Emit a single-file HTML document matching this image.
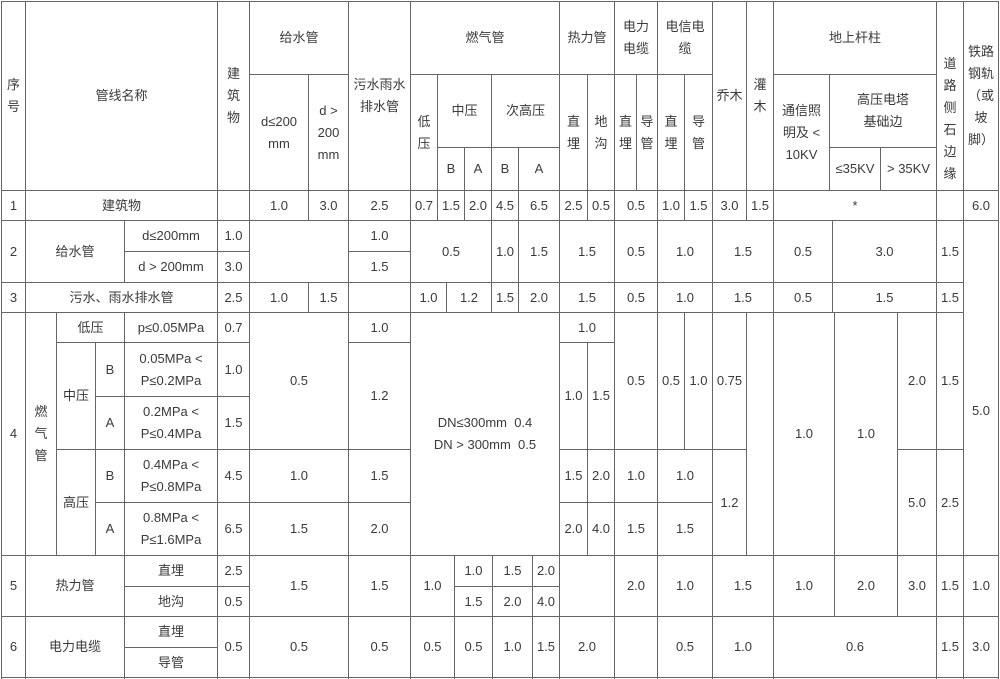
<!DOCTYPE html>
<html><head><meta charset="utf-8"><style>
html,body{margin:0;padding:0;background:#fff;width:1000px;height:679px;overflow:hidden;}
body{position:relative;font-family:"Liberation Sans","Noto Sans CJK SC",sans-serif;font-size:13px;color:#3a3a3a;}
.c{position:absolute;box-sizing:border-box;border:1px solid #666;display:flex;align-items:center;justify-content:center;text-align:center;line-height:22px;}
</style></head><body>
<!-- header -->
<div class="c" style="left:1px;top:1px;width:25px;height:190px">序<br>号</div>
<div class="c" style="left:25px;top:1px;width:193px;height:190px">管线名称</div>
<div class="c" style="left:217px;top:1px;width:33px;height:190px">建<br>筑<br>物</div>
<div class="c" style="left:249px;top:1px;width:100px;height:74px">给水管</div>
<div class="c" style="left:249px;top:74px;width:60px;height:117px">d≤200<br>mm</div>
<div class="c" style="left:308px;top:74px;width:41px;height:117px">d &gt;<br>200<br>mm</div>
<div class="c" style="left:348px;top:1px;width:63px;height:190px">污水雨水<br>排水管</div>
<div class="c" style="left:410px;top:1px;width:150px;height:74px">燃气管</div>
<div class="c" style="left:410px;top:74px;width:28px;height:117px">低<br>压</div>
<div class="c" style="left:437px;top:74px;width:55px;height:74px">中压</div>
<div class="c" style="left:437px;top:147px;width:28px;height:44px">B</div>
<div class="c" style="left:464px;top:147px;width:28px;height:44px">A</div>
<div class="c" style="left:491px;top:74px;width:69px;height:74px">次高压</div>
<div class="c" style="left:491px;top:147px;width:28px;height:44px">B</div>
<div class="c" style="left:518px;top:147px;width:42px;height:44px">A</div>
<div class="c" style="left:559px;top:1px;width:56px;height:74px">热力管</div>
<div class="c" style="left:559px;top:74px;width:29px;height:117px">直<br>埋</div>
<div class="c" style="left:587px;top:74px;width:28px;height:117px">地<br>沟</div>
<div class="c" style="left:614px;top:1px;width:44px;height:74px">电力<br>电缆</div>
<div class="c" style="left:614px;top:74px;width:23px;height:117px">直<br>埋</div>
<div class="c" style="left:636px;top:74px;width:22px;height:117px">导<br>管</div>
<div class="c" style="left:657px;top:1px;width:56px;height:74px">电信电<br>缆</div>
<div class="c" style="left:657px;top:74px;width:28px;height:117px">直<br>埋</div>
<div class="c" style="left:684px;top:74px;width:29px;height:117px">导<br>管</div>
<div class="c" style="left:712px;top:1px;width:35px;height:190px">乔木</div>
<div class="c" style="left:746px;top:1px;width:28px;height:190px">灌<br>木</div>
<div class="c" style="left:773px;top:1px;width:164px;height:74px">地上杆柱</div>
<div class="c" style="left:773px;top:74px;width:57px;height:117px">通信照<br>明及 &lt;<br>10KV</div>
<div class="c" style="left:829px;top:74px;width:108px;height:74px">高压电塔<br>基础边</div>
<div class="c" style="left:829px;top:147px;width:52px;height:44px">≤35KV</div>
<div class="c" style="left:880px;top:147px;width:57px;height:44px">&gt; 35KV</div>
<div class="c" style="left:936px;top:1px;width:28px;height:190px;padding-top:46px">道<br>路<br>侧<br>石<br>边<br>缘</div>
<div class="c" style="left:963px;top:1px;width:36px;height:190px">铁路<br>钢轨<br>（或<br>坡<br>脚）</div>
<!-- row1 -->
<div class="c" style="left:1px;top:190px;width:25px;height:31px">1</div>
<div class="c" style="left:25px;top:190px;width:193px;height:31px">建筑物</div>
<div class="c" style="left:217px;top:190px;width:33px;height:31px"></div>
<div class="c" style="left:249px;top:190px;width:60px;height:31px">1.0</div>
<div class="c" style="left:308px;top:190px;width:41px;height:31px">3.0</div>
<div class="c" style="left:348px;top:190px;width:63px;height:31px">2.5</div>
<div class="c" style="left:410px;top:190px;width:28px;height:31px">0.7</div>
<div class="c" style="left:437px;top:190px;width:28px;height:31px">1.5</div>
<div class="c" style="left:464px;top:190px;width:28px;height:31px">2.0</div>
<div class="c" style="left:491px;top:190px;width:28px;height:31px">4.5</div>
<div class="c" style="left:518px;top:190px;width:42px;height:31px">6.5</div>
<div class="c" style="left:559px;top:190px;width:29px;height:31px">2.5</div>
<div class="c" style="left:587px;top:190px;width:28px;height:31px">0.5</div>
<div class="c" style="left:614px;top:190px;width:44px;height:31px">0.5</div>
<div class="c" style="left:657px;top:190px;width:28px;height:31px">1.0</div>
<div class="c" style="left:684px;top:190px;width:29px;height:31px">1.5</div>
<div class="c" style="left:712px;top:190px;width:35px;height:31px">3.0</div>
<div class="c" style="left:746px;top:190px;width:28px;height:31px">1.5</div>
<div class="c" style="left:773px;top:190px;width:164px;height:31px">*</div>
<div class="c" style="left:936px;top:190px;width:28px;height:31px"></div>
<div class="c" style="left:963px;top:190px;width:36px;height:31px">6.0</div>
<!-- row2 -->
<div class="c" style="left:1px;top:220px;width:25px;height:63px">2</div>
<div class="c" style="left:25px;top:220px;width:100px;height:63px">给水管</div>
<div class="c" style="left:124px;top:220px;width:94px;height:32px">d≤200mm</div>
<div class="c" style="left:124px;top:251px;width:94px;height:32px">d &gt; 200mm</div>
<div class="c" style="left:217px;top:220px;width:33px;height:32px">1.0</div>
<div class="c" style="left:217px;top:251px;width:33px;height:32px">3.0</div>
<div class="c" style="left:249px;top:220px;width:100px;height:63px"></div>
<div class="c" style="left:348px;top:220px;width:63px;height:32px">1.0</div>
<div class="c" style="left:348px;top:251px;width:63px;height:32px">1.5</div>
<div class="c" style="left:410px;top:220px;width:82px;height:63px">0.5</div>
<div class="c" style="left:491px;top:220px;width:28px;height:63px">1.0</div>
<div class="c" style="left:518px;top:220px;width:42px;height:63px">1.5</div>
<div class="c" style="left:559px;top:220px;width:56px;height:63px">1.5</div>
<div class="c" style="left:614px;top:220px;width:44px;height:63px">0.5</div>
<div class="c" style="left:657px;top:220px;width:56px;height:63px">1.0</div>
<div class="c" style="left:712px;top:220px;width:62px;height:63px">1.5</div>
<div class="c" style="left:773px;top:220px;width:60px;height:63px">0.5</div>
<div class="c" style="left:832px;top:220px;width:105px;height:63px">3.0</div>
<div class="c" style="left:936px;top:220px;width:28px;height:63px">1.5</div>
<div class="c" style="left:963px;top:220px;width:36px;height:336px;padding-top:45px">5.0</div>
<!-- row3 -->
<div class="c" style="left:1px;top:282px;width:25px;height:31px">3</div>
<div class="c" style="left:25px;top:282px;width:193px;height:31px">污水、雨水排水管</div>
<div class="c" style="left:217px;top:282px;width:33px;height:31px">2.5</div>
<div class="c" style="left:249px;top:282px;width:60px;height:31px">1.0</div>
<div class="c" style="left:308px;top:282px;width:41px;height:31px">1.5</div>
<div class="c" style="left:348px;top:282px;width:63px;height:31px"></div>
<div class="c" style="left:410px;top:282px;width:37px;height:31px">1.0</div>
<div class="c" style="left:446px;top:282px;width:46px;height:31px">1.2</div>
<div class="c" style="left:491px;top:282px;width:28px;height:31px">1.5</div>
<div class="c" style="left:518px;top:282px;width:42px;height:31px">2.0</div>
<div class="c" style="left:559px;top:282px;width:56px;height:31px">1.5</div>
<div class="c" style="left:614px;top:282px;width:44px;height:31px">0.5</div>
<div class="c" style="left:657px;top:282px;width:56px;height:31px">1.0</div>
<div class="c" style="left:712px;top:282px;width:62px;height:31px">1.5</div>
<div class="c" style="left:773px;top:282px;width:60px;height:31px">0.5</div>
<div class="c" style="left:832px;top:282px;width:105px;height:31px">1.5</div>
<div class="c" style="left:936px;top:282px;width:28px;height:31px">1.5</div>
<!-- row4 -->
<div class="c" style="left:1px;top:312px;width:25px;height:244px">4</div>
<div class="c" style="left:25px;top:312px;width:32px;height:244px">燃<br>气<br>管</div>
<div class="c" style="left:56px;top:312px;width:69px;height:31px">低压</div>
<div class="c" style="left:124px;top:312px;width:94px;height:31px">p≤0.05MPa</div>
<div class="c" style="left:217px;top:312px;width:33px;height:31px">0.7</div>
<div class="c" style="left:56px;top:342px;width:40px;height:108px">中压</div>
<div class="c" style="left:95px;top:342px;width:30px;height:55px">B</div>
<div class="c" style="left:95px;top:396px;width:30px;height:54px">A</div>
<div class="c" style="left:124px;top:342px;width:94px;height:55px">0.05MPa &lt;<br>P≤0.2MPa</div>
<div class="c" style="left:124px;top:396px;width:94px;height:54px">0.2MPa &lt;<br>P≤0.4MPa</div>
<div class="c" style="left:217px;top:342px;width:33px;height:55px">1.0</div>
<div class="c" style="left:217px;top:396px;width:33px;height:54px">1.5</div>
<div class="c" style="left:56px;top:449px;width:40px;height:107px">高压</div>
<div class="c" style="left:95px;top:449px;width:30px;height:54px">B</div>
<div class="c" style="left:95px;top:502px;width:30px;height:54px">A</div>
<div class="c" style="left:124px;top:449px;width:94px;height:54px">0.4MPa &lt;<br>P≤0.8MPa</div>
<div class="c" style="left:124px;top:502px;width:94px;height:54px">0.8MPa &lt;<br>P≤1.6MPa</div>
<div class="c" style="left:217px;top:449px;width:33px;height:54px">4.5</div>
<div class="c" style="left:217px;top:502px;width:33px;height:54px">6.5</div>
<div class="c" style="left:249px;top:312px;width:100px;height:138px">0.5</div>
<div class="c" style="left:249px;top:449px;width:100px;height:54px">1.0</div>
<div class="c" style="left:249px;top:502px;width:100px;height:54px">1.5</div>
<div class="c" style="left:348px;top:312px;width:63px;height:31px">1.0</div>
<div class="c" style="left:348px;top:342px;width:63px;height:108px">1.2</div>
<div class="c" style="left:348px;top:449px;width:63px;height:54px">1.5</div>
<div class="c" style="left:348px;top:502px;width:63px;height:54px">2.0</div>
<div class="c" style="left:410px;top:312px;width:150px;height:244px">DN≤300mm&nbsp; 0.4<br>DN &gt; 300mm&nbsp; 0.5</div>
<div class="c" style="left:559px;top:312px;width:56px;height:31px">1.0</div>
<div class="c" style="left:559px;top:342px;width:29px;height:108px">1.0</div>
<div class="c" style="left:587px;top:342px;width:28px;height:108px">1.5</div>
<div class="c" style="left:559px;top:449px;width:29px;height:54px">1.5</div>
<div class="c" style="left:587px;top:449px;width:28px;height:54px">2.0</div>
<div class="c" style="left:559px;top:502px;width:29px;height:54px">2.0</div>
<div class="c" style="left:587px;top:502px;width:28px;height:54px">4.0</div>
<div class="c" style="left:614px;top:312px;width:44px;height:138px">0.5</div>
<div class="c" style="left:657px;top:312px;width:28px;height:138px">0.5</div>
<div class="c" style="left:684px;top:312px;width:29px;height:138px">1.0</div>
<div class="c" style="left:712px;top:312px;width:35px;height:138px">0.75</div>
<div class="c" style="left:614px;top:449px;width:44px;height:54px">1.0</div>
<div class="c" style="left:657px;top:449px;width:56px;height:54px">1.0</div>
<div class="c" style="left:614px;top:502px;width:44px;height:54px">1.5</div>
<div class="c" style="left:657px;top:502px;width:56px;height:54px">1.5</div>
<div class="c" style="left:712px;top:449px;width:35px;height:107px">1.2</div>
<div class="c" style="left:746px;top:312px;width:28px;height:244px"></div>
<div class="c" style="left:773px;top:312px;width:62px;height:244px">1.0</div>
<div class="c" style="left:834px;top:312px;width:64px;height:244px">1.0</div>
<div class="c" style="left:897px;top:312px;width:40px;height:138px">2.0</div>
<div class="c" style="left:897px;top:449px;width:40px;height:107px">5.0</div>
<div class="c" style="left:936px;top:312px;width:28px;height:138px">1.5</div>
<div class="c" style="left:936px;top:449px;width:28px;height:107px">2.5</div>
<!-- row5 -->
<div class="c" style="left:1px;top:555px;width:25px;height:62px">5</div>
<div class="c" style="left:25px;top:555px;width:100px;height:62px">热力管</div>
<div class="c" style="left:124px;top:555px;width:94px;height:32px">直埋</div>
<div class="c" style="left:124px;top:586px;width:94px;height:31px">地沟</div>
<div class="c" style="left:217px;top:555px;width:33px;height:32px">2.5</div>
<div class="c" style="left:217px;top:586px;width:33px;height:31px">0.5</div>
<div class="c" style="left:249px;top:555px;width:100px;height:62px">1.5</div>
<div class="c" style="left:348px;top:555px;width:63px;height:62px">1.5</div>
<div class="c" style="left:410px;top:555px;width:45px;height:62px">1.0</div>
<div class="c" style="left:454px;top:555px;width:39px;height:32px">1.0</div>
<div class="c" style="left:492px;top:555px;width:41px;height:32px">1.5</div>
<div class="c" style="left:532px;top:555px;width:28px;height:32px">2.0</div>
<div class="c" style="left:454px;top:586px;width:39px;height:31px">1.5</div>
<div class="c" style="left:492px;top:586px;width:41px;height:31px">2.0</div>
<div class="c" style="left:532px;top:586px;width:28px;height:31px">4.0</div>
<div class="c" style="left:559px;top:555px;width:56px;height:62px"></div>
<div class="c" style="left:614px;top:555px;width:44px;height:62px">2.0</div>
<div class="c" style="left:657px;top:555px;width:56px;height:62px">1.0</div>
<div class="c" style="left:712px;top:555px;width:62px;height:62px">1.5</div>
<div class="c" style="left:773px;top:555px;width:62px;height:62px">1.0</div>
<div class="c" style="left:834px;top:555px;width:64px;height:62px">2.0</div>
<div class="c" style="left:897px;top:555px;width:40px;height:62px">3.0</div>
<div class="c" style="left:936px;top:555px;width:28px;height:62px">1.5</div>
<div class="c" style="left:963px;top:555px;width:36px;height:62px">1.0</div>
<!-- row6 -->
<div class="c" style="left:1px;top:616px;width:25px;height:62px">6</div>
<div class="c" style="left:25px;top:616px;width:100px;height:62px">电力电缆</div>
<div class="c" style="left:124px;top:616px;width:94px;height:32px">直埋</div>
<div class="c" style="left:124px;top:647px;width:94px;height:31px">导管</div>
<div class="c" style="left:217px;top:616px;width:33px;height:62px">0.5</div>
<div class="c" style="left:249px;top:616px;width:100px;height:62px">0.5</div>
<div class="c" style="left:348px;top:616px;width:63px;height:62px">0.5</div>
<div class="c" style="left:410px;top:616px;width:45px;height:62px">0.5</div>
<div class="c" style="left:454px;top:616px;width:39px;height:62px">0.5</div>
<div class="c" style="left:492px;top:616px;width:41px;height:62px">1.0</div>
<div class="c" style="left:532px;top:616px;width:28px;height:62px">1.5</div>
<div class="c" style="left:559px;top:616px;width:56px;height:62px">2.0</div>
<div class="c" style="left:614px;top:616px;width:44px;height:62px"></div>
<div class="c" style="left:657px;top:616px;width:56px;height:62px">0.5</div>
<div class="c" style="left:712px;top:616px;width:62px;height:62px">1.0</div>
<div class="c" style="left:773px;top:616px;width:164px;height:62px">0.6</div>
<div class="c" style="left:936px;top:616px;width:28px;height:62px">1.5</div>
<div class="c" style="left:963px;top:616px;width:36px;height:62px">3.0</div>
<!-- row7 partial -->
<div class="c" style="left:1px;top:677px;width:25px;height:30px"></div>
<div class="c" style="left:25px;top:677px;width:100px;height:30px"></div>
<div class="c" style="left:124px;top:677px;width:94px;height:30px"></div>
<div class="c" style="left:217px;top:677px;width:33px;height:30px"></div>
<div class="c" style="left:249px;top:677px;width:100px;height:30px"></div>
<div class="c" style="left:348px;top:677px;width:63px;height:30px"></div>
<div class="c" style="left:410px;top:677px;width:45px;height:30px"></div>
<div class="c" style="left:454px;top:677px;width:39px;height:30px"></div>
<div class="c" style="left:492px;top:677px;width:41px;height:30px"></div>
<div class="c" style="left:532px;top:677px;width:28px;height:30px"></div>
<div class="c" style="left:559px;top:677px;width:56px;height:30px"></div>
<div class="c" style="left:614px;top:677px;width:44px;height:30px"></div>
<div class="c" style="left:657px;top:677px;width:56px;height:30px"></div>
<div class="c" style="left:712px;top:677px;width:62px;height:30px"></div>
<div class="c" style="left:773px;top:677px;width:164px;height:30px"></div>
<div class="c" style="left:936px;top:677px;width:28px;height:30px"></div>
<div class="c" style="left:963px;top:677px;width:36px;height:30px"></div>
</body></html>
